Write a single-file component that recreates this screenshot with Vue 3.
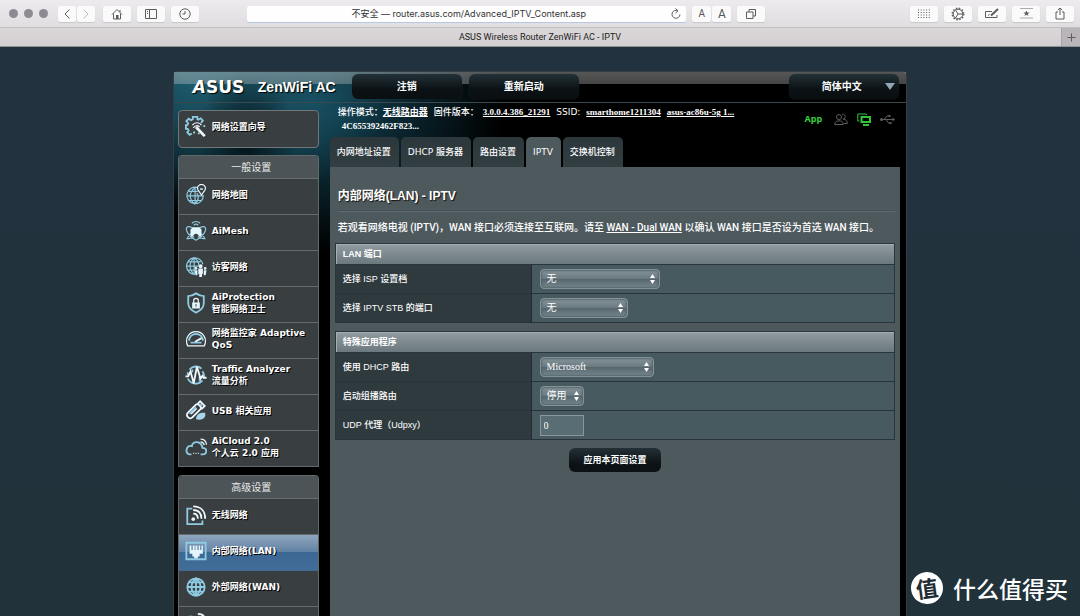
<script setup>
import { ref } from 'vue'

const address = ref('不安全 — router.asus.com/Advanced_IPTV_Content.asp')
const udpxy = ref('0')

const globe = 'M12 2.5a9.5 9.5 0 1 0 0 19a9.5 9.5 0 1 0 0-19M12 2.5v19M2.5 12h19M4 7h16M4 17h16M12 2.5C5.5 8 5.5 16 12 21.5M12 2.5C18.500 8 18.500 16 12 21.5'

const icons = {
  wizard: [
    { d: 'M17.500 7.500L19.500 5l-2.500-2.500l-2.500 1.500l-1-.5V1H8.500v2.500l-2 1L4 3L1.500 5.500L3.500 8l-1 2H1v4h2l1 2l-1.500 2l2.500 2.500l2.500-1.500', c: 'blue thick' },
    { d: 'M8 10c3-4 8-3 10 0M9 13c2-3 5-3 7-1', c: 'white' },
    { d: 'M12 12l9.500 10', c: 'white heavy' },
    { d: 'M14 18h2v2h-2zM20 10h2v2h-2zM9 17h2v2H9z', c: 'fill-blue' },
  ],
  map: [
    { d: 'M14 4A9 9 0 1 0 20 12M11 4v18M2 13h18M4 8h10M4 18h14M11 4C4 9 4 17 11 22M13 10c3 4 1 9-2 12', c: 'blue' },
    { d: 'M18 12l-3.500-5a4.200 4.200 0 1 1 7 0z', c: 'white' },
    { d: 'M16.500 4.500h3v2h-3z', c: 'fill-blue' },
  ],
  mesh: [
    { d: 'M7.500 3.500c2.500-2.500 6.500-2.500 9 0M9.500 5.800c1.500-1.500 3.500-1.500 5 0', c: 'blue' },
    { d: 'M2 8c3-3 17 6 20 13M22 8C19 5 5 14 2 21M2 8c-2 3 2 10 10 14c8-4 12-11 10-14M2 20c3 1 6-1 8-2M22 20c-3 1-6-1-8-2', c: 'blue' },
    { d: 'M6 10l3-2h6l3 2v8h-3c0-4-6-4-6 0H6z', c: 'fill-white' },
  ],
  guest: [
    { d: 'M11 20A9 9 0 1 1 19.500 9M10 2v18M1 11h14M3 6.500h14M3 15.500h8M10 2C4 7 4 15 10 20M10 2c3 2 5 5 5 8', c: 'blue' },
    { d: 'M17 9a2.200 2.200 0 1 1 0 4.400a2.200 2.200 0 1 1 0-4.400M14.500 13.500h5v6h-1V23h-3v-3.500h-1zM12 12a1.500 1.500 0 1 1 0 3a1.500 1.500 0 1 1 0-3M10.500 15.500H13.500V21h-2zM22 12a1.500 1.500 0 1 1 0 3a1.500 1.500 0 1 1 0-3M20.500 15.500h3L22.500 21h-2z', c: 'fill-white' },
  ],
  shield: [
    { d: 'M12 1.500C9 3.500 6 4.500 3.500 4.500V12c0 5 4 8.500 8.500 10.500c4.500-2 8.500-5.500 8.500-10.500V4.500C18 4.500 15 3.500 12 1.500z', c: 'blue thick' },
    { d: 'M9.500 12V9.500a2.500 2.500 0 0 1 5 0V12', c: 'white' },
    { d: 'M7.800 11.500h8.400V18H7.800zM11.500 13v3h1v-3z', c: 'fill-white' },
  ],
  gauge: [
    { d: 'M3 19.500C-1 11 5 4 12 4s13 7 9 15.500z', c: 'white' },
    { d: 'M4.500 14c0-10 15-10 15 0M6 16h12', c: 'blue thick' },
    { d: 'M11 15l7-4', c: 'white thick' },
  ],
  traffic: [
    { d: 'M5 6a9 9 0 0 1 13-1M19 8c2 3 2 6 1 8M3 16c4 7 12 7 16 2M3 9v3M8 6v3M16 13v6', c: 'blue thick' },
    { d: 'M.500 13.500h3L6 8l3.500 13L13 3l4 13l2-3l1.500 2h3', c: 'white thick' },
  ],
  usb: [
    { d: 'M3 14l9-9c2-2 7 3 5 5l-9 9c-3 3-8-2-5-5zM13 5l3.500-3.500l5 5L18 10M6.500 15l6-6', c: 'white thick' },
    { d: 'M16.500 4.500l2 2M5 15l7-7', c: 'blue thick' },
    { d: 'M12 21c0-5 4-8 10-7c1 5-2 9-10 7z', c: 'fill-blue' },
  ],
  cloud: [
    { d: 'M17 20h2.500c5 0 5-7-.5-7C18 5 8 5 7.500 11C1 9-.500 20 5 20h2', c: 'blue thick' },
    { d: 'M9 19h1M11.500 19h1M14 19h1M17 6.500c2 0 3.500 1.500 4 3.500M17 3.500c3.500 0 6 2.500 6.500 6', c: 'white' },
  ],
  wireless: [
    { d: 'M8 5H2.500v17H19v-4', c: 'blue thick' },
    { d: 'M9 2.500c8 0 13 5 13 13.500M9 6.500c6 0 9 4 9 9.500M9 10.500c3 0 5 2 5 5.500', c: 'white thick' },
    { d: 'M9 14.500a2 2 0 1 1 0 4a2 2 0 1 1 0-4', c: 'fill-white' },
  ],
  port: [
    { d: 'M1.500 3h21v18h-21z', c: 'blue thick' },
    { d: 'M5 6h2v5h1.500V6h2v5h1V6h2v5H15V6h1.500v5H18V6h1.500v9H16v3h-2v2h-4v-2H8v-3H5z', c: 'fill-white' },
  ],
  globe: [{ d: globe, c: 'blue thick' }],
  antenna: [
    { d: 'M4 4h4v8H4zM10 5h4v7h-4z', c: 'fill-blue' },
    { d: 'M14 2c5 0 8 3 8 8M15 5c3 0 4 2 4 5', c: 'white thick' },
  ],
}

const groups = [
  {
    title: '一般设置',
    items: [
      { icon: 'map', lines: ['网络地图'] },
      { icon: 'mesh', lines: ['AiMesh'] },
      { icon: 'guest', lines: ['访客网络'] },
      { icon: 'shield', lines: ['AiProtection', '智能网络卫士'] },
      { icon: 'gauge', lines: ['网络监控家 Adaptive', 'QoS'] },
      { icon: 'traffic', lines: ['Traffic Analyzer', '流量分析'] },
      { icon: 'usb', lines: ['USB 相关应用'] },
      { icon: 'cloud', lines: ['AiCloud 2.0', '个人云 2.0 应用'] },
    ],
  },
  {
    title: '高级设置',
    items: [
      { icon: 'wireless', lines: ['无线网络'] },
      { icon: 'port', lines: ['内部网络(LAN)'], active: true },
      { icon: 'globe', lines: ['外部网络(WAN)'] },
      { icon: 'antenna', lines: [] },
    ],
  },
]

const tabs = ['内网地址设置', 'DHCP 服务器', '路由设置', 'IPTV', '交换机控制']

const sections = [
  {
    title: 'LAN 端口',
    rows: [
      { id: 'isp', label: '选择 ISP 设置档', value: '无', size: 'xl' },
      { id: 'stb', label: '选择 IPTV STB 的端口', value: '无', size: 'md' },
    ],
  },
  {
    title: '特殊应用程序',
    rows: [
      { id: 'dhcp', label: '使用 DHCP 路由', value: 'Microsoft', size: 'lg' },
      { id: 'multicast', label: '启动组播路由', value: '停用', size: 'sm' },
      { id: 'udpxy', label: 'UDP 代理（Udpxy）', input: true },
    ],
  },
]
</script>

<template>
  <div class="window">
    <div class="toolbar">
      <div class="lights"><i></i><i></i><i></i></div>
      <div class="pair">
        <button class="tool narrow" aria-label="后退"><svg width="8" height="12" viewBox="0 0 8 12"><path d="M6.500 1.500L2 6l4.500 4.500" /></svg></button>
        <button class="tool narrow dim" aria-label="前进"><svg width="8" height="12" viewBox="0 0 8 12"><path d="M1.500 1.500L6 6l-4.500 4.500" /></svg></button>
      </div>
      <button class="tool home" aria-label="主页">
        <svg width="12" height="12" viewBox="0 0 12 12"><path d="M1 6.500L6 1.500l5 5M2.500 5.500V11h7V5.500M9 4V2" /><path class="solid" d="M5 7h2.500v4H5z" /></svg>
      </button>
      <button class="tool" aria-label="边栏"><svg width="12" height="10" viewBox="0 0 12 10"><path d="M.500.500h11v9H.500zM4.500.500v9M2 2.500h1M2 4.500h1" /></svg></button>
      <button class="tool" aria-label="历史记录"><svg width="12" height="12" viewBox="0 0 12 12"><path d="M6 .800a5.200 5.200 0 1 1 0 10.400a5.200 5.200 0 1 1 0-10.400M6 3v3H3.500" /></svg></button>
      <div class="spacer"></div>
      <div class="address">
        <input v-model="address" type="text" aria-label="地址" />
        <button aria-label="重新载入"><svg width="10" height="12" viewBox="0 0 10 12"><path d="M7 2.800A4 4 0 1 0 9 6.500M4.500.500L7 2.800L4.500 5" /></svg></button>
      </div>
      <div class="pair joined">
        <button class="tool text small">A</button>
        <button class="tool text">A</button>
      </div>
      <button class="tool" aria-label="标签页概览"><svg width="10" height="10" viewBox="0 0 10 10"><path d="M.500 3h6.500v6.500H.500zM3 3V.500h6.500V7H7" /></svg></button>
      <div class="spacer wide"></div>
      <button class="tool" aria-label="阅读列表">
        <svg width="12" height="10" viewBox="0 0 12 10"><path class="dots" d="M0 1h12M0 3.500h12M0 6h12M0 8.500h12" /></svg>
      </button>
      <button class="tool" aria-label="设置">
        <svg width="14" height="14" viewBox="0 0 14 14"><path d="M7 2.200a4.800 4.800 0 1 1 0 9.600a4.800 4.800 0 1 1 0-9.600M7 7L4.500 3M7 7h4.800M7 7l-2.500 4" /><circle class="teeth" cx="7" cy="7" r="5.700" /></svg>
      </button>
      <button class="tool" aria-label="自动填充">
        <svg width="14" height="11" viewBox="0 0 14 11"><path d="M7 3.500H.500v6h11.500V7M3 7.500l1.500-1" /><path class="bold" d="M6 7.500l7-6.500" /></svg>
      </button>
      <button class="tool" aria-label="添加书签">
        <svg width="13" height="11" viewBox="0 0 13 11"><path class="faint" d="M0 .500h13M0 10h13" /><path class="solid" d="M6.500 2.500l.9 2h2.100L7.800 5.900l.7 2.200l-2-1.300l-2 1.300l.7-2.200L3.500 4.500h2.100z" /></svg>
      </button>
      <button class="tool" aria-label="共享"><svg width="10" height="13" viewBox="0 0 10 13"><path d="M3 5H1v7h8V5H7M5 8V1M2.800 3L5 1l2.200 2" /></svg></button>
    </div>
    <div class="tabbar">
      <span class="tab-title">ASUS Wireless Router ZenWiFi AC - IPTV</span>
      <button class="new-tab" aria-label="新建标签页"><svg width="9" height="9" viewBox="0 0 9 9"><path d="M4.500.500v8M.500 4.500h8" /></svg></button>
    </div>

    <div class="page">
      <div class="router">
        <header class="head">
          <span class="logo"><em>A</em>SUS</span>
          <span class="model">ZenWiFi AC</span>
          <button class="dark">注销</button>
          <button class="dark">重新启动</button>
          <button class="dark language">简体中文<i></i></button>
        </header>

        <div class="body">
          <nav class="side">
            <a class="item wizard" href="#">
              <svg class="glyph" viewBox="0 0 24 24"><path v-for="p in icons.wizard" :key="p.d" :d="p.d" :class="p.c" /></svg>
              <span>网络设置向导</span>
            </a>
            <div v-for="group in groups" :key="group.title" class="group">
              <h2>{{ group.title }}</h2>
              <a v-for="item in group.items" :key="item.icon" href="#" class="item" :class="{ active: item.active }">
                <svg class="glyph" viewBox="0 0 24 24"><path v-for="p in icons[item.icon]" :key="p.d" :d="p.d" :class="p.c" /></svg>
                <span v-if="item.lines.length"><template v-for="(line, n) in item.lines" :key="line"><br v-if="n" />{{ line }}</template></span>
              </a>
            </div>
          </nav>

          <main class="main">
            <div class="status">
              <p class="info">
                操作模式：<a href="#">无线路由器</a>
                <span class="next">固件版本：</span><a href="#" class="version">3.0.0.4.386_21291</a>
                <span class="next">SSID:</span> <a href="#" class="ssid">smarthome1211304</a>
                <a href="#" class="second">asus-ac86u-5g 1...</a>
                <br /><b>4C655392462F823...</b>
              </p>
              <div class="state">
                <a href="#" class="app">App</a>
                <svg width="14" height="13" viewBox="0 0 14 13"><path d="M5 1.500a2.300 2.300 0 0 1 0 5a2.300 2.300 0 0 1 0-5M.700 11.500c0-5 8.600-5 8.600 0zM8 1.500c4-1.500 4 5 1 4.500c3 0 4.300 2 4.300 4.500H10" /></svg>
                <svg class="on" width="14" height="13" viewBox="0 0 14 13"><path d="M2.500 8H.800V1h8.500v1" /><path class="strong" d="M4.500 4h8.500v5H4.500z" /><path class="strong" d="M6 12h6" /></svg>
                <svg width="15" height="11" viewBox="0 0 15 11"><path d="M1 5.500h12M4 5.500L7 2h2M6 5.500L8.500 9H10" /><path class="solid" d="M1.500 4a1.500 1.500 0 1 1 0 3a1.500 1.500 0 0 1 0-3M12.500 3.500L15 5.500l-2.500 2zM8.500 1h2v2h-2zM9.500 8h2v2h-2z" /></svg>
              </div>
            </div>

            <div class="tabs">
              <a v-for="tab in tabs" :key="tab" href="#" :class="{ current: tab === 'IPTV' }">{{ tab }}</a>
            </div>

            <section class="panel">
              <h1>内部网络(LAN) - IPTV</h1>
              <p class="intro">若观看网络电视 (IPTV)，WAN 接口必须连接至互联网。请至 <a href="#">WAN - Dual WAN</a> 以确认 WAN 接口是否设为首选 WAN 接口。</p>

              <table v-for="section in sections" :key="section.title">
                <thead>
                  <tr><th colspan="2">{{ section.title }}</th></tr>
                </thead>
                <tbody>
                  <tr v-for="row in section.rows" :key="row.id">
                    <th scope="row"><label :for="row.id">{{ row.label }}</label></th>
                    <td>
                      <input v-if="row.input" :id="row.id" v-model="udpxy" type="text" />
                      <span v-else class="picker" :class="row.size">
                        <select :id="row.id"><option>{{ row.value }}</option></select>
                        <svg width="5" height="10" viewBox="0 0 5 10"><path d="M0 4l2.500-4L5 4zM0 6l2.500 4L5 6z" /></svg>
                      </span>
                    </td>
                  </tr>
                </tbody>
              </table>

              <button class="apply">应用本页面设置</button>
            </section>
          </main>
        </div>
      </div>
    </div>

    <div class="mark"><span class="seal">值</span><span>什么值得买</span></div>
  </div>
</template>

<style>
body {
  margin: 0;
  background: #22323b;
}
</style>

<style scoped>
* {
  box-sizing: border-box;
}
.window {
  position: relative;
  display: flex;
  flex-direction: column;
  height: 100vh;
  overflow: hidden;
  font: 9px/12px "Liberation Sans", "Noto Sans CJK SC", sans-serif;
}
button,
input,
select {
  font: inherit;
  color: inherit;
  border: 0;
  padding: 0;
  margin: 0;
}
svg {
  display: block;
  flex: none;
}
a {
  color: inherit;
}

.toolbar {
  flex: none;
  display: flex;
  align-items: center;
  gap: 6px;
  height: 28px;
  padding: 0 6px 0 9px;
  background: linear-gradient(#edebed, #dfdde0);
  border-bottom: 1px solid #c4bfc1;
}
.lights {
  display: flex;
  gap: 6px;
  margin-right: 4px;
}
.lights i {
  width: 9px;
  height: 9px;
  border-radius: 50%;
  background: #8d8a92;
}
.pair {
  display: flex;
  gap: 1px;
}
.tool {
  flex: none;
  display: flex;
  align-items: center;
  justify-content: center;
  width: 28px;
  height: 16px;
  border-radius: 2px;
  background: #fbfafb;
  box-shadow: 0 1px 1px #c9c6ca;
  color: #555;
}
.tool.narrow {
  width: 18px;
}
.home {
  margin-left: 2px;
}
.tool.text {
  width: 19px;
  font: 12px/16px Roboto, sans-serif;
}
.tool.small {
  font-size: 10px;
}
.toolbar path,
.new-tab path {
  fill: none;
  stroke: #5d5b5e;
}
.toolbar path.solid {
  fill: #5d5b5e;
  stroke: none;
}
.toolbar path.bold {
  stroke-width: 2;
}
.toolbar path.faint {
  stroke: #aaa;
}
.toolbar path.dots {
  stroke-dasharray: 1 1.700;
}
.toolbar .teeth {
  fill: none;
  stroke: #5d5b5e;
  stroke-width: 1.500;
  stroke-dasharray: 1.500 1.500;
}
.toolbar .dim path {
  stroke: #bbb;
}
.spacer {
  flex: 1;
  margin: 0 -6px;
}
.spacer.wide {
  flex: 3;
}
.address {
  flex: 9;
  display: flex;
  align-items: center;
  height: 16px;
  padding-right: 5px;
  background: #fefefe;
  border-radius: 2px;
  box-shadow: 0 1px #b4c9e2;
}
.address input {
  flex: 1;
  min-width: 0;
  height: 16px;
  padding-left: 19px;
  background: none;
  color: #333;
  font: 9px/16px Inter, "Noto Sans CJK SC", sans-serif;
  text-align: center;
}
.address button {
  background: none;
}
.tabbar {
  flex: none;
  display: flex;
  align-items: center;
  height: 19px;
  background: linear-gradient(#dbd7d9, #d4d0d2);
  border-bottom: 1px solid #8d9295;
}
.tab-title {
  flex: 1;
  padding-left: 19px;
  color: #222;
  font: 9px/18px Roboto, sans-serif;
  text-align: center;
}
.new-tab {
  display: flex;
  align-items: center;
  justify-content: center;
  width: 19px;
  height: 18px;
  background: #bab5b8;
  border-left: 1px solid #a8a4a7;
}

.page {
  flex: 1;
  display: flex;
  justify-content: center;
  padding-top: 24px;
  background: linear-gradient(#22323f, #21323a);
  color: #fff;
}
.router {
  width: 68%;
  min-width: 734px;
  flex: none;
  display: flex;
  flex-direction: column;
  border: 1px solid #343d43;
  border-bottom: 0;
  border-radius: 4px 4px 0 0;
  background:
    radial-gradient(50px 70px at 72px 70px, rgba(2, 12, 17, .85), transparent),
    radial-gradient(200px 130px at 20px 10px, #1d5b6d, transparent),
    radial-gradient(190px 150px at 140px 30px, #14485a, transparent),
    #000;
}
.head {
  display: flex;
  align-items: center;
  height: 31px;
  padding: 0 7px 1px 19px;
  border-bottom: 1px solid #3a494e;
  background: linear-gradient(rgba(225, 225, 225, .38), rgba(205, 205, 205, .34) 12px, transparent 12px);
}
.logo {
  width: 65px;
  font: bold 17px/20px "DejaVu Sans", sans-serif;
  text-shadow: 1px 1px 1px #000;
}
.model {
  width: 94px;
  font-weight: bold;
  font-size: 14px;
  line-height: 18px;
  text-shadow: 1px 1px 1px #000;
}
.dark {
  width: 110px;
  height: 25px;
  margin-right: 7px;
  border-radius: 6px;
  background: linear-gradient(#233238, #0b1215 60%, #0a0f11);
  box-shadow: 0 0 1px #39474c;
  font-weight: bold;
  font-size: 10px;
}
.language {
  display: flex;
  align-items: center;
  justify-content: center;
  gap: 23px;
  margin: 0 0 0 auto;
  padding-left: 28px;
}
.language i {
  border: 5px solid transparent;
  border-top: 7px solid #93a6b5;
  border-bottom: 0;
}
.body {
  flex: 1;
  display: grid;
  grid-template-columns: 141px 1fr;
  gap: 11px;
  padding: 0 6px 0 4px;
}
.side {
  padding-top: 7px;
  font: bold 9px/12px "DejaVu Sans", "Noto Sans CJK SC", sans-serif;
}
.item {
  display: flex;
  align-items: center;
  gap: 5px;
  height: 36px;
  padding: 0 0 4px 6px;
  border-bottom: 1px solid #646b6d;
  background: #393e40;
  color: #fff;
  text-decoration: none;
  text-shadow: 1px 1px 0 #000;
}
.item.wizard {
  height: 38px;
  border: 1px solid #6f7779;
  border-radius: 4px;
}
.item.active {
  border-color: #3f6790;
  background: linear-gradient(#8fa6bf, #6282a4 48%, #3d6893 50%, #416d99);
}
.group {
  margin-top: 7px;
  border: 1px solid #62696b;
  border-bottom: 0;
  border-radius: 4px 4px 0 0;
}
.group + .group {
  margin-top: 8px;
}
.group h2 {
  height: 23px;
  margin: 0;
  border-bottom: 1px solid #656e71;
  border-radius: 3px 3px 0 0;
  background: #4c5457;
  color: #e8eaea;
  font: 10px/22px "Noto Sans CJK SC", sans-serif;
  padding-left: 6px;
  text-align: center;
}
.glyph {
  width: 22px;
  height: 22px;
}
.glyph path {
  fill: none;
  stroke-width: 1.300;
}
.glyph .blue {
  stroke: #8ecbe2;
}
.glyph .white {
  stroke: #eef9ff;
}
.glyph .thick {
  stroke-width: 2;
}
.glyph .heavy {
  stroke-width: 3;
}
.glyph .fill-blue {
  fill: #a7d7e8;
}
.glyph .fill-white {
  fill: #e4f6fd;
}

.main {
  display: flex;
  flex-direction: column;
  min-width: 0;
}
.status {
  display: flex;
  justify-content: space-between;
  height: 34px;
  padding: 2px 5px 0 8px;
}
.info {
  margin: 0;
  font: 500 9px/14px "DejaVu Sans", "Noto Sans CJK SC", sans-serif;
  white-space: nowrap;
}
.info a,
.info b {
  font-family: "Liberation Serif", "Noto Sans CJK SC", serif;
  font-weight: bold;
}
.info b {
  margin-left: 4px;
}
.info .version {
  margin-left: 4px;
}
.info .next {
  margin-left: 6px;
}
.info .ssid {
  margin-left: 3px;
}
.info .second {
  margin-left: 6px;
}
.state {
  display: flex;
  align-items: center;
  gap: 9px;
  height: 28px;
}
.app {
  margin-right: 3px;
  color: #37d13f;
  font: bold 9px/14px "Open Sans", sans-serif;
  text-decoration: none;
}
.state path {
  fill: none;
  stroke: #5c5f60;
}
.state .solid {
  fill: #5c5f60;
  stroke: none;
}
.state .on path {
  stroke: #2fc43a;
}
.state .on .strong {
  stroke-width: 2;
}
.tabs {
  display: flex;
  gap: 2px;
  height: 30px;
}
.tabs a {
  padding: 0 8px 0 7px;
  border-radius: 5px 5px 0 0;
  background: linear-gradient(#2c373b, #323e42);
  font: 500 9px/30px "DejaVu Sans", "Noto Sans CJK SC", sans-serif;
  text-decoration: none;
  white-space: nowrap;
}
.tabs .current {
  background: #4d595d;
}
.panel {
  flex: 1;
  display: flex;
  flex-direction: column;
  padding: 19px 5px 0 5px;
  background: #4d595d;
}
h1 {
  margin: 0 0 0 3px;
  padding-bottom: 5px;
  border-bottom: 1px solid #5f6b6f;
  box-shadow: 0 -1px #465155 inset;
  font-size: 12px;
  line-height: 20px;
  text-shadow: 1px 1px 1px #111;
}
.intro {
  margin: 8px 0 7px 3px;
  font: 500 10px/16px Roboto, "Noto Sans CJK SC", sans-serif;
}
table {
  width: 100%;
  margin-bottom: 8px;
  border: 1px solid #2b363a;
  border-collapse: collapse;
}
th {
  padding: 0 0 0 7px;
  text-align: left;
}
thead th {
  height: 21px;
  background: linear-gradient(#919ba0, #6a777c);
  border: 1px solid #2b363a;
  box-shadow: 1px 1px #a6b0b4 inset;
}
tbody tr {
  height: 29px;
  border-bottom: 1px solid #28343a;
}
tbody th {
  width: 35%;
  background: #2f3a3e;
  border-right: 1px solid #222c30;
  font-weight: 500;
}
td {
  padding: 0 0 0 8px;
  background: #475a5f;
}
td input,
.picker {
  font: 10px/14px "Liberation Serif", "Noto Sans CJK SC", serif;
}
td input {
  display: block;
  width: 44px;
  height: 21px;
  padding-left: 3px;
  border: 1px solid #8a9699;
  background: #596d74;
}
.picker {
  position: relative;
  display: block;
  height: 20px;
}
.picker select {
  appearance: none;
  display: block;
  width: 100%;
  height: 20px;
  padding-left: 6px;
  border: 1px solid #869296;
  border-radius: 4px;
  background: linear-gradient(#87959a, #6a7a80 48%, #54656b 50%, #788a90);
  box-shadow: 0 0 2px 1px #55666b inset;
}
.picker svg {
  position: absolute;
  right: 5px;
  top: 5px;
  fill: #fff;
  pointer-events: none;
}
.xl {
  width: 120px;
}
.lg {
  width: 114px;
}
.md {
  width: 88px;
}
.sm {
  width: 44px;
}
.apply {
  align-self: center;
  width: 92px;
  height: 24px;
  border-radius: 6px;
  background: linear-gradient(#233036, #0b1114 70%);
  font-weight: bold;
}

.mark {
  position: absolute;
  right: 12px;
  bottom: 10px;
  display: flex;
  align-items: center;
  gap: 10px;
  color: #fff;
  font: 500 23px/36px "Noto Sans CJK SC", sans-serif;
}
.seal {
  width: 32px;
  height: 32px;
  border-radius: 50%;
  background: #fff;
  color: #1f2d35;
  font-weight: bold;
  font-size: 22px;
  line-height: 31px;
  text-align: center;
  transform: rotate(-8deg);
}
</style>
